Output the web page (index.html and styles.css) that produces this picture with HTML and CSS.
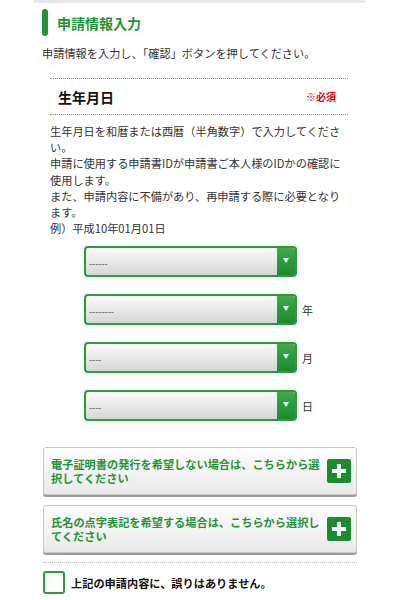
FILE: index.html
```html
<!DOCTYPE html>
<html lang="ja">
<head>
    <meta charset="UTF-8">
    <meta name="viewport" content="width=device-width, initial-scale=1.0">
    <title>申請情報入力</title>
    <link rel="stylesheet" href="styles.css">
</head>
<body>
    <div class="top-rule"></div>
    <h2 class="section-title">申請情報入力</h2>
    <p class="lead">申請情報を入力し、「確認」ボタンを押してください。</p>

    <div class="field">
        <div class="field-head">
            <span class="field-name">生年月日</span>
            <span class="required">※必須</span>
        </div>
        <p class="field-desc">生年月日を和暦または西暦（半角数字）で入力してください。<br>申請に使用する申請書IDが申請書ご本人様のIDかの確認に使用します。<br>また、申請内容に不備があり、再申請する際に必要となり<span class="nobr">ます。</span><br>例）平成10年01月01日</p>

        <div class="select-list">
            <div class="select-row">
                <div class="select-box">
                    <select name="era"><option>------</option></select>
                </div>
            </div>
            <div class="select-row">
                <div class="select-box">
                    <select name="year"><option>--------</option></select>
                </div>
                <span class="unit">年</span>
            </div>
            <div class="select-row">
                <div class="select-box">
                    <select name="month"><option>----</option></select>
                </div>
                <span class="unit">月</span>
            </div>
            <div class="select-row">
                <div class="select-box">
                    <select name="day"><option>----</option></select>
                </div>
                <span class="unit">日</span>
            </div>
        </div>
    </div>

    <div class="options">
        <button type="button" class="toggle">
            <span class="toggle-text">電子証明書の発行を希望しない場合は、こちらから選択してください</span>
            <span class="plus"></span>
        </button>
        <button type="button" class="toggle">
            <span class="toggle-text">氏名の点字表記を希望する場合は、こちらから選択してください</span>
            <span class="plus"></span>
        </button>
    </div>

    <label class="confirm">
        <input type="checkbox" name="confirm">
        <span class="check"></span>
        上記の申請内容に、誤りはありません。
    </label>
</body>
</html>
```

FILE: styles.css
```css
body {
    margin: 0;
    font-family: "Noto Sans CJK JP", "Noto Sans", sans-serif;
    color: #333;
    background-color: #fff;
}
.top-rule {
    margin-left: 34px;
    width: 331px;
    height: 3px;
    background-color: #e3e9ed;
}
.section-title {
    display: flex;
    align-items: center;
    gap: 9px;
    margin: 6px 0 0 42px;
    height: 27px;
    font-size: 14px;
    font-weight: bold;
    color: #1f9436;
}
.section-title::before {
    content: "";
    width: 6px;
    height: 27px;
    border-radius: 3px;
    background-color: #1f9436;
}
.lead {
    margin: 9px 0 0 42px;
    font-size: 11.2px;
    line-height: 16px;
}
.field {
    margin: 17px 0 0 50px;
    width: 298px;
}
.field-head {
    display: flex;
    align-items: center;
    justify-content: space-between;
    height: 35px;
    padding: 0 12px 0 8px;
    border-top: 1px dotted #4cb84c;
    border-bottom: 1px dotted #4cb84c;
}
.field-name {
    font-size: 14px;
    font-weight: bold;
    color: #111;
}
.required {
    font-size: 10px;
    font-weight: bold;
    color: #e60012;
}
.field-desc {
    margin: 8px 0 0;
    width: 293px;
    font-size: 11.2px;
    line-height: 16.2px;
}
.nobr {
    white-space: nowrap;
}
.select-list {
    display: flex;
    flex-direction: column;
    gap: 17px;
    margin: 10px 0 0 34px;
}
.select-row {
    display: flex;
    align-items: center;
    gap: 5px;
}
.select-box {
    position: relative;
    width: 213px;
    height: 31px;
    box-sizing: border-box;
    border: 2px solid #2b9b3d;
    border-radius: 4px;
    overflow: hidden;
    background: linear-gradient(#fbfbfb, #d6d6d6);
}
.select-box select {
    appearance: none;
    -webkit-appearance: none;
    width: 100%;
    height: 100%;
    margin: 0;
    padding: 0 22px 0 3px;
    border: none;
    background: transparent;
    font-family: inherit;
    font-size: 9px;
    color: #444;
}
/* green arrow part of the select */
.select-box::after {
    content: "";
    position: absolute;
    top: 0;
    right: 0;
    width: 18px;
    height: 100%;
    background: linear-gradient(#3aad4c, #1d8a30);
    pointer-events: none;
}
.select-box::before {
    content: "";
    position: absolute;
    top: 10px;
    right: 6px;
    z-index: 1;
    border-left: 3px solid transparent;
    border-right: 3px solid transparent;
    border-top: 5px solid #fff;
    pointer-events: none;
}
.unit {
    font-size: 11px;
    color: #333;
}
.options {
    display: flex;
    flex-direction: column;
    gap: 10px;
    margin: 26px 0 0 43px;
    width: 314px;
}
.toggle {
    display: flex;
    align-items: center;
    gap: 6px;
    height: 48px;
    padding: 0 5px 0 7px;
    border: 1px solid #c8c8c8;
    border-radius: 3px;
    background: linear-gradient(#fdfdfd, #e9e9e9);
    box-shadow: 0 2px 0 #9a9a9a;
    font-family: inherit;
    text-align: left;
    cursor: pointer;
}
.toggle-text {
    flex: 1;
    font-size: 11.2px;
    font-weight: bold;
    line-height: 14px;
    color: #1f9436;
}
.plus {
    position: relative;
    flex: none;
    width: 24px;
    height: 24px;
    border-radius: 2px;
    background-color: #1b8c2e;
}
.plus::before,
.plus::after {
    content: "";
    position: absolute;
    background-color: #fff;
}
.plus::before {
    left: 5px;
    top: 10px;
    width: 14px;
    height: 4px;
}
.plus::after {
    left: 10px;
    top: 5px;
    width: 4px;
    height: 14px;
}
.confirm {
    display: flex;
    align-items: center;
    gap: 6px;
    margin: 9px 0 0 43px;
    width: 314px;
    padding-top: 8px;
    border-top: 1px dotted #bbb;
    font-size: 11.2px;
    font-weight: bold;
    color: #111;
}
.confirm input {
    display: none;
}
.check {
    width: 22px;
    height: 23px;
    box-sizing: border-box;
    border: 2px solid #2b9b3d;
    border-radius: 3px;
    background-color: #fff;
}
```
